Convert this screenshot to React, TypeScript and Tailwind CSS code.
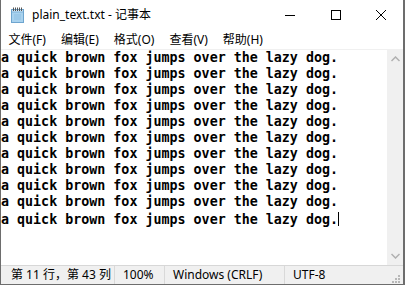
import React from 'react';

const uiFont = { fontFamily: '"Noto Sans", "Noto Sans CJK SC", sans-serif' };

const NotepadIcon: React.FC = () => (
  <svg width="15" height="16" viewBox="0 0 15 16" className="shrink-0">
    <rect x="1.5" y="2.5" width="12" height="13" fill="#cfe6f5" stroke="#6ea5cf" />
    <rect x="2" y="5" width="11" height="10" fill="#a9d2ee" />
    <path d="M2 5 L13 5" stroke="#7fb3da" />
    {[3, 5, 7, 9, 11].map((x) => (
      <rect key={x} x={x} y="0.5" width="1" height="3.5" fill="#555" />
    ))}
    <path d="M4 8h7M4 10h7M4 12h7" stroke="#8fc0e3" />
  </svg>
);

const TitleBar: React.FC = () => (
  <div className="flex h-[30px] items-center bg-white">
    <div className="flex items-center pl-[9px]">
      <NotepadIcon />
      <span className="ml-[7px] text-[12px] text-black" style={uiFont}>
        plain_text.txt - 记事本
      </span>
    </div>
    <div className="ml-auto flex h-full">
      <div className="flex h-full w-[46px] items-center justify-center">
        <svg width="10" height="10" viewBox="0 0 10 10">
          <path d="M0 5.5h10" stroke="#000" strokeWidth="1" />
        </svg>
      </div>
      <div className="flex h-full w-[46px] items-center justify-center">
        <svg width="10" height="10" viewBox="0 0 10 10">
          <rect x="0.5" y="0.5" width="9" height="9" fill="none" stroke="#000" />
        </svg>
      </div>
      <div className="flex h-full w-[44px] items-center justify-center">
        <svg width="10" height="10" viewBox="0 0 10 10">
          <path d="M0 0L10 10M10 0L0 10" stroke="#000" strokeWidth="1" />
        </svg>
      </div>
    </div>
  </div>
);

const MenuBar: React.FC = () => {
  const items = ['文件(F)', '编辑(E)', '格式(O)', '查看(V)', '帮助(H)'];
  return (
    <div className="flex h-[19px] items-center bg-white" style={uiFont}>
      {items.map((it) => (
        <span key={it} className="px-[7.5px] text-[12px] leading-[19px] text-black">
          {it}
        </span>
      ))}
    </div>
  );
};

const Chevron: React.FC<{ up?: boolean }> = ({ up }) => (
  <svg width="9" height="6" viewBox="0 0 9 6">
    <path
      d={up ? 'M0.5 5L4.5 1L8.5 5' : 'M0.5 1L4.5 5L8.5 1'}
      fill="none"
      stroke="#b0b0b0"
      strokeWidth="1.5"
    />
  </svg>
);

const Editor: React.FC = () => {
  const line = 'a quick brown fox jumps over the lazy dog.';
  const lines = Array.from({ length: 11 }, () => line);
  return (
    <div className="flex min-h-0 flex-1 border-t border-[#f0f0f0]">
      <div
        className="min-w-0 flex-1 overflow-hidden bg-white text-[13.33px] font-bold leading-[16px] text-black"
        style={{ fontFamily: '"DejaVu Sans Mono", monospace' }}
      >
        {lines.map((l, i) => (
          <div key={i} className="whitespace-pre">
            {l}
            {i === lines.length - 1 && (
              <span className="inline-block h-[14px] w-px translate-y-[2px] bg-black align-baseline" />
            )}
          </div>
        ))}
      </div>
      <div className="flex w-[16px] flex-col items-center justify-between bg-[#f0f0f0] py-[6px]">
        <Chevron up />
        <Chevron />
      </div>
    </div>
  );
};

const StatusBar: React.FC = () => (
  <div
    className="flex h-[19px] items-center border-t border-[#d7d7d7] bg-[#f0f0f0] text-[12px] text-black"
    style={uiFont}
  >
    <div className="w-[113px] overflow-hidden whitespace-nowrap pl-[10px]">第 11 行，第 43 列</div>
    <div className="h-full w-px bg-[#d9d9d9]" />
    <div className="w-[49px] pl-[8px]">100%</div>
    <div className="h-full w-px bg-[#d9d9d9]" />
    <div className="w-[119px] pl-[8px]">Windows (CRLF)</div>
    <div className="h-full w-px bg-[#d9d9d9]" />
    <div className="flex-1 pl-[8px]">UTF-8</div>
    <svg width="12" height="12" viewBox="0 0 12 12" className="mr-[2px] mt-[6px] self-end">
      {[
        [9, 3],
        [6, 6],
        [9, 6],
        [3, 9],
        [6, 9],
        [9, 9],
      ].map(([x, y]) => (
        <rect key={`${x}-${y}`} x={x} y={y} width="2" height="2" fill="#b8b8b8" />
      ))}
    </svg>
  </div>
);

export default function App() {
  return (
    <div className="flex h-[285px] w-[405px] flex-col overflow-hidden border-b border-l border-r-2 border-[#6d6d6d] bg-white">
      <TitleBar />
      <MenuBar />
      <Editor />
      <StatusBar />
    </div>
  );
}
